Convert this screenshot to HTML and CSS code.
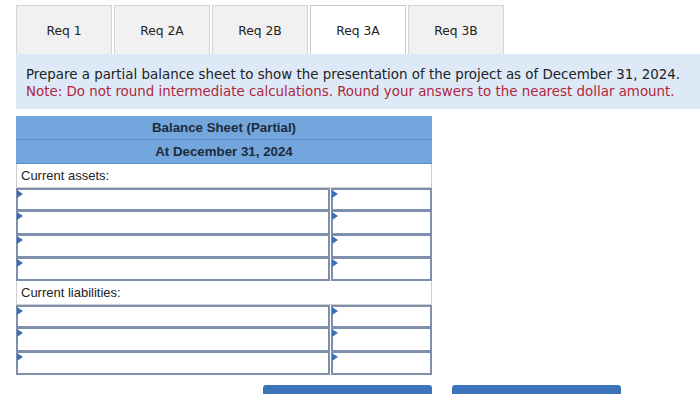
FILE: index.html
```html
<!DOCTYPE html>
<html>
<head>
<meta charset="utf-8">
<link rel="stylesheet" href="styles.css">
</head>
<body>
<div class="page">
  <div class="tabs">
    <div class="tab">Req 1</div>
    <div class="tab">Req 2A</div>
    <div class="tab">Req 2B</div>
    <div class="tab active">Req 3A</div>
    <div class="tab">Req 3B</div>
  </div>
  <div class="instructions">
    <p class="main">Prepare a partial balance sheet to show the presentation of the project as of December 31, 2024.</p>
    <p class="note">Note: Do not round intermediate calculations. Round your answers to the nearest dollar amount.</p>
  </div>
  <div class="sheet">
    <div class="head">Balance Sheet (Partial)</div>
    <div class="head">At December 31, 2024</div>
    <div class="label">Current assets:</div>
    <div class="inrow"><div class="cell wide"></div><div class="cell amt"></div></div>
    <div class="inrow"><div class="cell wide"></div><div class="cell amt"></div></div>
    <div class="inrow"><div class="cell wide"></div><div class="cell amt"></div></div>
    <div class="inrow"><div class="cell wide"></div><div class="cell amt"></div></div>
    <div class="label">Current liabilities:</div>
    <div class="inrow"><div class="cell wide"></div><div class="cell amt"></div></div>
    <div class="inrow"><div class="cell wide"></div><div class="cell amt"></div></div>
    <div class="inrow"><div class="cell wide"></div><div class="cell amt"></div></div>
  </div>
  <div class="buttons">
    <div class="btn"></div>
    <div class="btn"></div>
  </div>
</div>
</body>
</html>
```
FILE: styles.css
```css
html, body {
  margin: 0;
  padding: 0;
  background: #ffffff;
}
.page {
  padding: 5px 0 0 16px;
  overflow: hidden;
  height: 394px;
  box-sizing: border-box;
}
.tabs {
  display: flex;
  gap: 2px;
  height: 49px;
}
.tab {
  width: 96px;
  box-sizing: border-box;
  border: 1px solid #d4d4d4;
  border-bottom: none;
  background: #f1f1f1;
  display: flex;
  align-items: center;
  justify-content: center;
  padding-top: 2px;
  font-family: "DejaVu Sans", Verdana, sans-serif;
  font-size: 12.3px;
  color: #222;
}
.tab.active {
  background: #ffffff;
  border-color: #c8c8c8;
}
.instructions {
  background: #dde9f6;
  height: 55px;
  box-sizing: border-box;
  padding: 12px 0 0 10px;
  font-family: "DejaVu Sans", Verdana, sans-serif;
  font-size: 13.4px;
  line-height: 17px;
  white-space: nowrap;
}
.instructions p {
  margin: 0;
}
.main {
  color: #222;
}
.note {
  color: #b0263a;
}
.sheet {
  width: 416px;
  margin-top: 7px;
  font-family: "Liberation Sans", Arial, sans-serif;
}
.head {
  background: #72a6dd;
  height: 23px;
  border-bottom: 1px solid #5d8dc4;
  display: flex;
  align-items: center;
  justify-content: center;
  font-weight: bold;
  font-size: 13.3px;
  color: #1d2b3a;
}
.label {
  border: 1px solid #cfcfcf;
  border-top: none;
  display: flex;
  align-items: center;
  padding-left: 4px;
  font-size: 13px;
  color: #222;
  box-sizing: border-box;
  height: 24px;
}
.inrow {
  display: flex;
  height: 23.3px;
}
.cell {
  position: relative;
  box-sizing: border-box;
  border: 2px solid #7e8fac;
  background: #fff;
  height: 100%;
}
.cell + .cell {
  margin-left: 1px;
}
.inrow + .inrow .cell {
  margin-top: -1px;
  height: calc(100% + 1px);
}
.wide {
  width: 314px;
}
.amt {
  width: 101px;
}
.cell::before {
  content: "";
  position: absolute;
  left: -1px;
  top: 0px;
  border-top: 4px solid transparent;
  border-bottom: 4px solid transparent;
  border-left: 6px solid #3a6fb8;
}
.buttons {
  display: flex;
  gap: 20px;
  margin: 10px 0 0 247px;
}
.btn {
  width: 169px;
  height: 20px;
  background: #3c74ba;
  border-radius: 3px;
}
```
